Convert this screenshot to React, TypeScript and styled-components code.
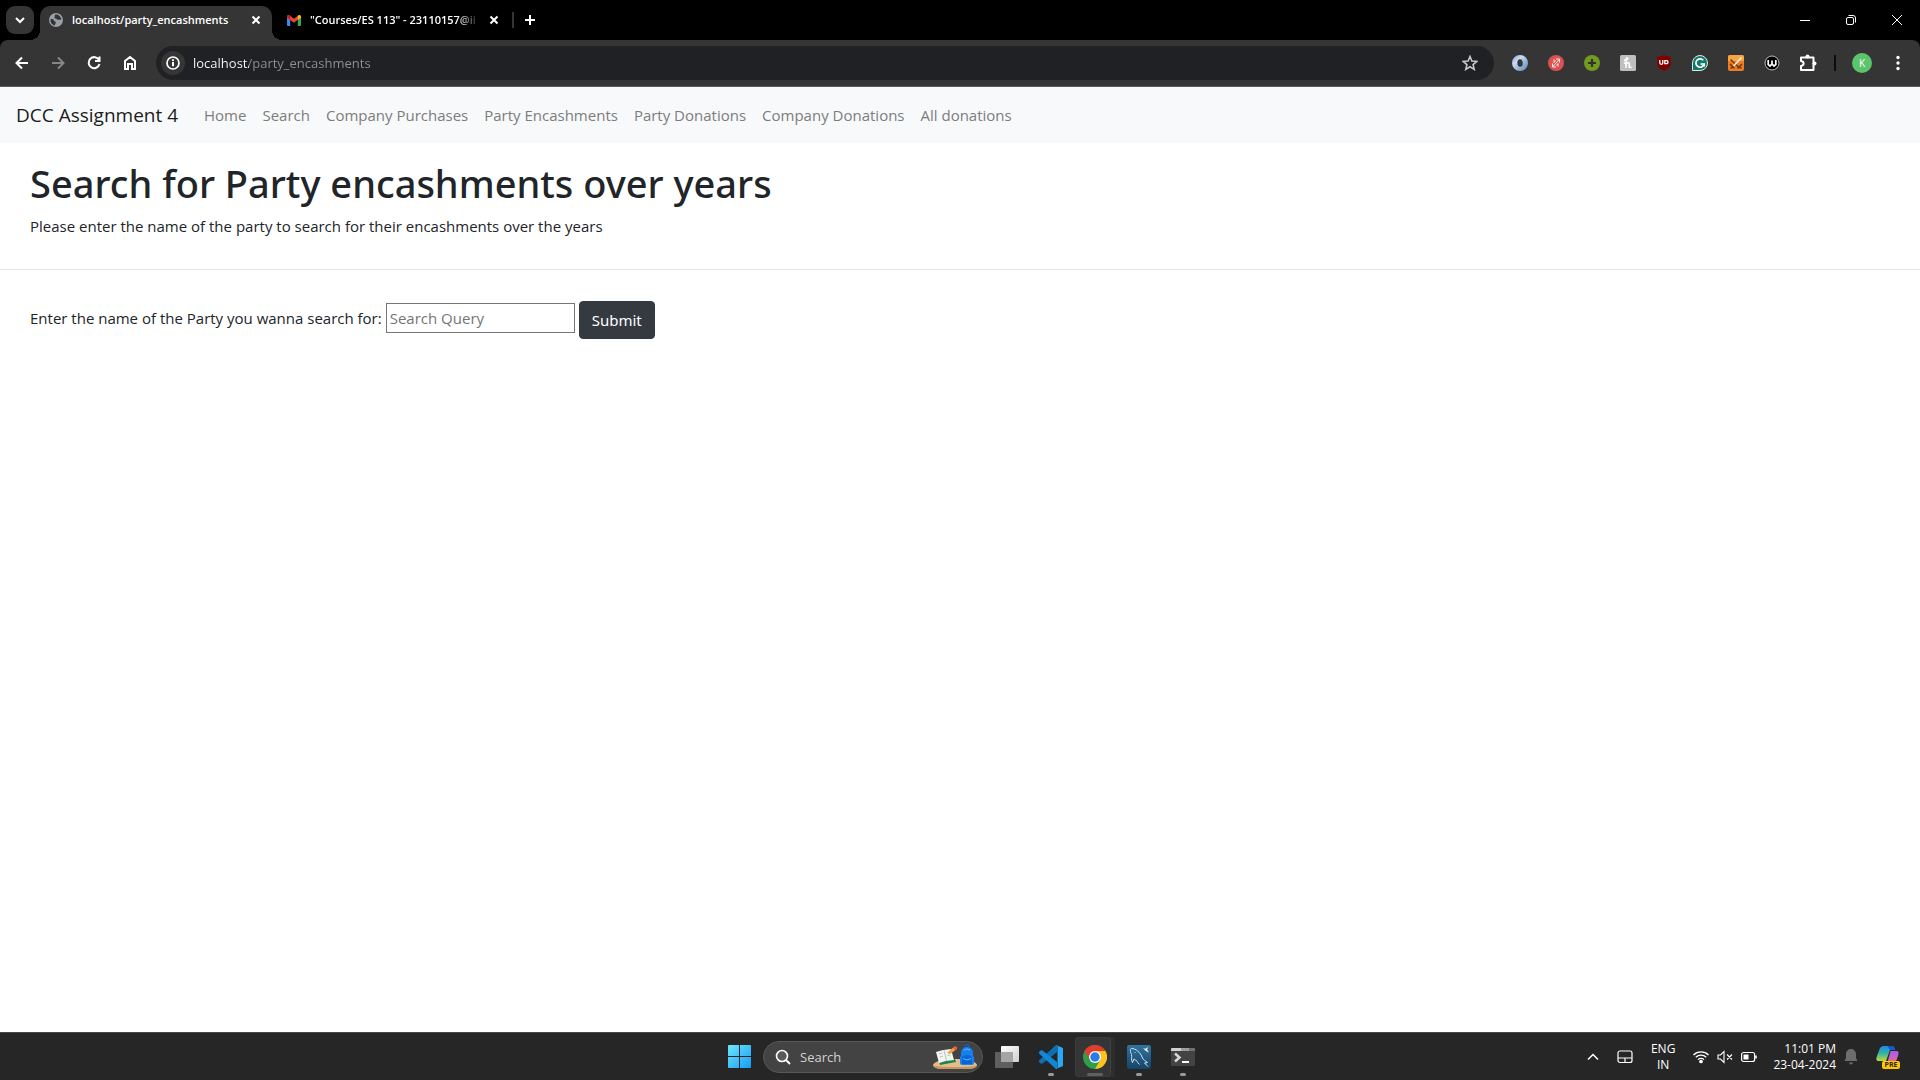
import React, { ReactNode } from "react";
import styled, { createGlobalStyle } from "styled-components";

const GlobalStyle = createGlobalStyle`
  *, *::before, *::after { box-sizing: border-box; }
  body {
    margin: 0;
    background: #fff;
    font-family: "Open Sans", "Noto Sans", sans-serif;
  }
  button, input { font-family: inherit; }
  svg { display: block; }
`;

const Screen = styled.div`
  display: flex;
  flex-direction: column;
  min-height: 100vh;
`;

/* ---------- Browser ---------- */

const IconButton = styled.button<{ $width?: number; $height?: number; $color?: string }>`
  display: flex;
  align-items: center;
  justify-content: center;
  flex: none;
  width: ${(p) => p.$width ?? 36}px;
  height: ${(p) => p.$height ?? 34}px;
  padding: 0;
  border: 0;
  background: none;
  color: ${(p) => p.$color ?? "#fff"};
`;

const TabStrip = styled.div`
  display: flex;
  align-items: center;
  height: 40px;
  padding: 0 0 0 6px;
  background: #000;
`;

const TabSearch = styled.button`
  display: flex;
  align-items: center;
  justify-content: center;
  width: 28px;
  height: 28px;
  margin-right: 6px;
  padding: 0;
  border: 0;
  border-radius: 9px;
  background: #353535;
  color: #fff;
`;

const Tab = styled.div<{ $active?: boolean }>`
  display: flex;
  align-items: center;
  align-self: flex-end;
  width: ${(p) => (p.$active ? 232 : 240)}px;
  height: 34px;
  padding: 0 4px 6px ${(p) => (p.$active ? 9 : 15)}px;
  border-radius: 10px 10px 0 0;
  background: ${(p) => (p.$active ? "#353535" : "transparent")};
`;

const TabFoot = styled.span<{ $side: "left" | "right" }>`
  align-self: flex-end;
  width: 10px;
  height: 10px;
  margin-${(p) => p.$side}: -10px;
  background: radial-gradient(
    circle at ${(p) => (p.$side === "left" ? "0" : "100%")} 0,
    transparent 10px,
    #353535 10px
  );
`;

const TabTitle = styled.span<{ $fade?: boolean }>`
  flex: 1;
  margin-left: 9px;
  color: #fff;
  font-size: 11px;
  font-weight: 600;
  line-height: 18px;
  white-space: nowrap;
  ${(p) => p.$fade && "mask-image: linear-gradient(to right, #000 86%, transparent);"}
`;

const TabDivider = styled.span`
  width: 2px;
  height: 16px;
  background: #353535;
`;

const WindowControls = styled.div`
  display: flex;
  margin-left: auto;
`;

const ToolbarBack = styled.div`
  background: #000;
`;

const Toolbar = styled.div`
  display: flex;
  align-items: center;
  height: 47px;
  padding: 0 4px;
  border-bottom: 1px solid #5c5c5c;
  border-radius: 8px 8px 0 0;
  background: #353535;
`;

const AddressBar = styled.div`
  display: flex;
  align-items: center;
  flex: 1;
  height: 34px;
  margin: 0 8px;
  padding: 0 6px 0 5px;
  border-radius: 17px;
  background: #202124;
`;

const SiteInfo = styled.button`
  display: flex;
  align-items: center;
  justify-content: center;
  width: 24px;
  height: 24px;
  margin-right: 8px;
  padding: 0;
  border: 0;
  border-radius: 50%;
  background: #353535;
  color: #fff;
`;

const AddressInput = styled.input`
  flex: 1;
  min-width: 0;
  padding: 0;
  border: 0;
  outline: 0;
  background: linear-gradient(to right, #fff 56px, #8d9094 56px);
  background-clip: text;
  -webkit-background-clip: text;
  color: transparent;
  font-size: 13px;
  line-height: 20px;
`;

const ToolbarDivider = styled.span`
  width: 2px;
  height: 16px;
  margin: 0 8px;
  background: #0c0c0c;
`;

const Avatar = styled.span`
  display: flex;
  align-items: center;
  justify-content: center;
  width: 20px;
  height: 20px;
  border-radius: 50%;
  background: #5bc46c;
  color: #fff;
  font-size: 10px;
`;

/* ---------- Web page ---------- */

const NavBar = styled.nav`
  display: flex;
  align-items: center;
  height: 56px;
  padding: 0 16px;
  background: #f8f9fa;
`;

const Brand = styled.a`
  margin-right: 18px;
  color: #1c1c1c;
  font-size: 19px;
  line-height: 30px;
  text-decoration: none;
`;

const NavLinks = styled.ul`
  display: flex;
  margin: 0;
  padding: 0;
  list-style: none;
`;

const NavLink = styled.a`
  display: block;
  padding: 0 8px;
  color: #7c7d7d;
  font-size: 15px;
  line-height: 24px;
  text-decoration: none;
`;

const Page = styled.main`
  flex: 1;
  color: #212529;
  font-size: 15px;
  line-height: 24px;
`;

const Intro = styled.header`
  padding: 16px 30px 31px;
  border-bottom: 1px solid #e5e5e5;
`;

const Title = styled.h1`
  margin: 0 0 7px;
  font-family: "Noto Sans", "Open Sans", sans-serif;
  font-size: 38px;
  font-weight: 500;
  line-height: 48px;
`;

const Lead = styled.p`
  margin: 0;
`;

const SearchForm = styled.form`
  display: flex;
  align-items: flex-start;
  gap: 4px;
  padding: 31px 30px;
`;

const FieldLabel = styled.label`
  padding-top: 5px;
`;

const QueryInput = styled.input`
  width: 189px;
  height: 30px;
  margin-top: 2px;
  padding: 1px 3px;
  border: 1px solid #767676;
  border-radius: 0;
  color: #212529;
  font-size: 15px;
  &::placeholder { color: #757575; opacity: 1; }
`;

const SubmitButton = styled.button`
  height: 38px;
  padding: 0 12px;
  border: 1px solid #343a40;
  border-radius: 4px;
  background: #343a40;
  color: #fff;
  font-family: "Noto Sans", "Open Sans", sans-serif;
  font-size: 15px;
  line-height: 24px;
`;

/* ---------- Taskbar ---------- */

const Taskbar = styled.footer`
  display: grid;
  grid-template-columns: 1fr auto 1fr;
  align-items: center;
  height: 48px;
  border-top: 1px solid #484848;
  background: #262626;
  color: #fff;
`;

const TaskGroup = styled.div`
  display: flex;
  align-items: center;
  grid-column: 2;
  padding-left: 2px;
`;

const TaskSearch = styled.label`
  display: flex;
  align-items: center;
  width: 220px;
  height: 32px;
  margin: 0 2px;
  padding: 0 4px 0 11px;
  border: 1px solid #575757;
  border-radius: 16px;
  background: #434343;
`;

const TaskSearchInput = styled.input`
  flex: 1;
  min-width: 0;
  margin-left: 9px;
  padding: 0;
  border: 0;
  outline: 0;
  background: none;
  color: #fff;
  font-size: 13px;
  &::placeholder { color: #d2d2d2; opacity: 1; }
`;

const AppButton = styled.button`
  display: flex;
  flex-direction: column;
  align-items: center;
  justify-content: center;
  width: 44px;
  height: 47px;
  padding: 0;
  border: 0;
  background: none;
`;

const AppTile = styled.span<{ $active?: boolean }>`
  display: flex;
  flex-direction: column;
  align-items: center;
  width: 40px;
  height: 40px;
  padding-top: 8px;
  border-radius: 4px;
  background: ${(p) => (p.$active ? "#353535" : "transparent")};
  box-shadow: ${(p) => (p.$active ? "inset -4px 0 #2d2d2d, inset -5px 0 #414141, inset 0 0 0 1px #3b3b3b" : "none")};
`;

const Running = styled.span<{ $active?: boolean }>`
  width: ${(p) => (p.$active ? 16 : 6)}px;
  height: 3px;
  margin-top: 4px;
  border-radius: 2px;
  background: ${(p) => (p.$active ? "#606060" : "#9a9a9a")};
`;

const Tray = styled.div`
  display: flex;
  align-items: center;
  justify-content: flex-end;
  padding-right: 20px;
`;

const TrayButton = styled.button<{ $gap: number }>`
  display: flex;
  align-items: center;
  gap: 8px;
  margin-right: ${(p) => p.$gap}px;
  padding: 0;
  border: 0;
  background: none;
  color: #fff;
`;

const TrayText = styled.span<{ $align: "center" | "right" }>`
  font-size: 12px;
  line-height: 16px;
  text-align: ${(p) => p.$align};
  white-space: pre-line;
`;

/* ---------- Drawings ---------- */

const Stroke = ({ size = 16, width = 2, children }: { size?: number; width?: number; children: ReactNode }) => (
  <svg width={size} height={size} viewBox={`0 0 ${size} ${size}`} fill="none" stroke="currentColor" strokeWidth={width}>
    {children}
  </svg>
);

const CloseIcon = () => (
  <Stroke size={10} width={2}><path d="M1.5 1.5l7 7M8.5 1.5l-7 7" /></Stroke>
);

const Globe = () => (
  <svg width="14" height="14" viewBox="0 0 14 14">
    <circle cx="7" cy="7" r="7" fill="#9aa0a6" />
    <path d="M1.6 6.2c1.8-.3 3 .2 3.400 1.300.3 1 1.600.8 1.800 1.800.2 1-.8 1.300-.9 3.200-2.500-.4-5-3-4.300-6.300zM6 1.500c-.7 1 .4 1.500-.3 2.300-.8.7-.2 1.700.9 1.600 1.200 0 1 1 2.100 1.300 1.400.4 2-.5 3.800-.2C12 4 10 1.300 7 1.400z" fill="#353535" />
  </svg>
);

const Gmail = () => (
  <svg width="14" height="11" viewBox="0 0 14 11">
    <path d="M0 2h3.200v9H1a1 1 0 0 1-1-1z" fill="#4285f4" />
    <path d="M10.800 2H14v8a1 1 0 0 1-1 1h-2.200z" fill="#34a853" />
    <path d="M0 1.700C0 .2 1.700-.4 2.800.5L7 3.700 11.200.5v4L7 7.700 0 2.800z" fill="#ea4335" />
    <path d="M0 1.700C0 .2 1.700-.4 2.800.5l.4.3v4L0 2.800z" fill="#c5221f" />
    <path d="M10.800.8l.4-.3C12.300-.4 14 .2 14 1.700v1.100l-3.200 2z" fill="#fbbc04" />
  </svg>
);

const extensions: { name: string; art: ReactNode }[] = [
  { name: "Ring", art: <>
    <defs><linearGradient id="ring" x1="0" y1="0" x2="1" y2="1"><stop offset="0" stopColor="#7fa3cf" /><stop offset=".35" stopColor="#c9dcf2" /><stop offset=".65" stopColor="#8fb0d8" /><stop offset="1" stopColor="#5f86b8" /></linearGradient></defs>
    <path fillRule="evenodd" d="M8 0a8 8 0 1 1 0 16A8 8 0 0 1 8 0zM8 4.200C5.800 4.200 5.400 6 5.400 8s.6 3.800 2.800 3.800S10.800 10 10.700 8 10.200 4.200 8 4.200z" fill="url(#ring)" />
  </> },
  { name: "Redirect", art: <>
    <circle cx="8" cy="8" r="8" fill="#dc5151" />
    <path d="M8 4h3.500v3.500M8 12H4.500V8.500M11.500 4L4.500 12M6 4.500v3M10 8.500v3M7.500 5.500L6 7.500M10 8.500L8.500 10.500" stroke="#ffe9e9" fill="none" strokeWidth="1" />
  </> },
  { name: "Add", art: <>
    <circle cx="8" cy="8" r="8" fill="#739b1d" />
    <path d="M8 4v8M4 8h8" stroke="#303030" strokeWidth="2.200" />
  </> },
  { name: "Honey", art: <>
    <rect width="16" height="16" rx="1.500" fill="#bfbfbf" />
    <path d="M4 5c2.500 1 4.500-1 3.500-2S6 4 6 6v7M6 9.500C7 7.500 9.600 7 9.400 9.300l-.3 2c-.1 1.600 1.600 1.500 2.400.4M3.800 8h3" stroke="#fff" strokeWidth="1.500" fill="none" />
  </> },
  { name: "Shield", art: <>
    <path d="M8 0c2 1 4 1.600 6.800 1.700v6.800C14.500 12 11.500 14 8 16 4.500 14 1.500 12 1.200 8.500V1.700C4 1.600 6 1 8 0z" fill="#800000" />
    <path d="M3.800 5v2.800a1.500 1.500 0 0 0 3 0V5M8.800 5.700v3h1.700a1.500 1.500 0 0 0 0-3H8.200" stroke="#fff" strokeWidth="1.300" fill="none" />
  </> },
  { name: "Grammar", art: <>
    <path d="M8 .5a7.500 7.500 0 1 1 0 15H.5V8A7.500 7.500 0 0 1 8 .5z" fill="#127b68" stroke="#dce9e6" />
    <path d="M11.300 5.300A4.200 4.200 0 1 0 12.200 9H8.500M12.200 8.500v3" stroke="#fff" strokeWidth="1.700" fill="none" />
  </> },
  { name: "Swords", art: <>
    <rect width="16" height="16" rx="2" fill="#ee7d20" />
    <path d="M0 2a2 2 0 0 1 2-2h12a2 2 0 0 1 2 2v4H0z" fill="#f7a540" />
    <path d="M2.500 4.500l9 8.500M2 9l4.500 4.500M9.500 13.500L14 9M2.500 13.500L5.500 11M13.500 13.500L11 11" stroke="#713912" strokeWidth="1.500" />
    <path d="M13.500 2.500L5.500 11" stroke="#f4f0ec" strokeWidth="1.700" />
  </> },
  { name: "Wappler", art: <>
    <circle cx="8" cy="8" r="7" fill="#000" stroke="#bdbdbd" strokeWidth="1" />
    <path d="M4.200 5v4.500L6 11l2-2 2 2 1.800-1.500V5M8 5.500V9" stroke="#fff" strokeWidth="1.700" fill="none" />
  </> },
];

const StartIcon = () => (
  <svg width="23" height="23" viewBox="0 0 23 23">
    <defs>
      <linearGradient id="start" x1="0" y1="0" x2="1" y2="1">
        <stop offset="0" stopColor="#6ee6fb" /><stop offset="1" stopColor="#169bf5" />
      </linearGradient>
    </defs>
    <path d="M1 0h10v11H0V1a1 1 0 0 1 1-1zM12 0h10a1 1 0 0 1 1 1v10H12zM0 12h11v11H1a1 1 0 0 1-1-1zM12 12h11v10a1 1 0 0 1-1 1H12z" fill="url(#start)" />
  </svg>
);

const DeskScene = () => (
  <svg width="46" height="26" viewBox="0 0 46 26">
    <path d="M1 21c0-2 8-6 15-6h15c7 0 14 4 14 6s-4 4-8 4H9c-4 0-8-2-8-4z" fill="#e3bd90" />
    <path d="M1 21.500c2 2 5 3.500 8 3.500h28c4 0 7-1.500 8-3.500-8 2-35 2-44 0z" fill="#c9965d" />
    <path d="M5 10l3 11 16-3-1-3z" fill="#218349" />
    <path d="M4 8l7-2 8-1 3 11-8 1-7 2z" fill="#f1f4ef" />
    <path d="M12 6l2.500 11M7 10l3-1M8 13l3-1M15 8.500l3-.5M15.500 11.500l3-.5" stroke="#a5b7ac" strokeWidth=".8" />
    <path d="M16 10l1-3 5-4 2 2.500-5 4z" fill="#f2a23b" /><path d="M21 4l2-2 2 1v2l-1.500 1.500z" fill="#e65a4e" />
    <path d="M33 3c0-3 4-3 4 0" stroke="#0b5fc5" strokeWidth="1.300" fill="none" />
    <path d="M29 9c0-8 12-8 12 0v3l1 1v6c0 1-1 2-2 2H30c-1 0-2-1-2-2v-6l1-1z" fill="#1680ee" />
    <path d="M30 14c0-4 10-4 10 0v6H30z" fill="#0964d5" /><path d="M31 14.500q4 3 8 0" stroke="#58b7fc" fill="none" />
    <path d="M32 6q3-2 6 0" stroke="#5cc0ff" fill="none" />
  </svg>
);

const TaskViewIcon = () => (
  <svg width="24" height="24" viewBox="0 0 24 24">
    <defs><linearGradient id="pane" x1="0" y1="0" x2="1" y2="1"><stop offset="0" stopColor="#fff" /><stop offset="1" stopColor="#cfcfcf" /></linearGradient></defs>
    <rect y="7" width="18" height="16" rx="1" fill="#5f5f5f" />
    <rect x="6" y="1" width="18" height="16" rx="1" fill="url(#pane)" />
    <path d="M6 7h12v10H6z" fill="#a5a5a5" />
  </svg>
);

const CodeIcon = () => (
  <svg width="24" height="24" viewBox="0 0 24 24">
    <path d="M17 0L0 15.500v1.500l2 1.700 1.500-.1L18 7V0z" fill="#0b70b8" />
    <path d="M17 24L0 8.500V7l2-1.700 1.500.1L18 17v7z" fill="#1287d3" />
    <path d="M17 0l7 3v18l-7 3c1-.3 1.500-1 1.500-2V2c0-1-.5-1.700-1.500-2z" fill="#2aa8f2" />
  </svg>
);

const ChromeIcon = () => (
  <svg width="24" height="24" viewBox="0 0 24 24">
    <circle cx="12" cy="12" r="12" fill="#2e9e49" />
    <path d="M12 6h10.400A12 12 0 0 1 12 24l5.200-9z" fill="#fcc31e" />
    <path d="M1.600 6A12 12 0 0 1 22.400 6H12L6.800 15z" fill="#e33b2e" />
    <circle cx="12" cy="12" r="6" fill="#fff" /><circle cx="12" cy="12" r="4.700" fill="#287be8" />
  </svg>
);

const DolphinIcon = () => (
  <svg width="24" height="24" viewBox="0 0 24 24">
    <defs><linearGradient id="sea" x1="0" y1="0" x2="0" y2="1"><stop offset="0" stopColor="#31749f" /><stop offset="1" stopColor="#154468" /></linearGradient></defs>
    <rect width="24" height="24" rx="2" fill="url(#sea)" />
    <path d="M5.500 17.500C3.500 14 5.500 12 4.500 9.500 3.500 7 2.500 4 4.500 3.500c4 0 9 3.500 11 9.500.6 1.700 2.500 2.500 5 4.500l-3 .5 3.500 3.500M5.500 17.500L7 14c2.500 1 3 3 5.500 5.500M7.500 7l.8.8" stroke="#d3e2ec" strokeWidth="1" fill="none" />
    <path d="M16 3l2.500.8L21 2l-.8 2.800L22 7.500l-3.200-1.600z" fill="#e8f2f8" />
  </svg>
);

const TerminalIcon = () => (
  <svg width="24" height="24" viewBox="0 0 24 24">
    <rect y="3" width="24" height="18" rx="1" fill="#434343" />
    <path d="M0 6V4a1 1 0 0 1 1-1h9v3z" fill="#d0d0d0" /><path d="M10 3h8v3h-8z" fill="#9d9d9d" /><path d="M18 3h5a1 1 0 0 1 1 1v2h-6z" fill="#717171" />
    <path d="M4 8.500l4.500 4L4 16.500" stroke="#d6d6d6" strokeWidth="2.500" fill="none" /><path d="M11 17h7" stroke="#fff" strokeWidth="2" />
  </svg>
);

const apps = [
  { name: "Task view", icon: <TaskViewIcon />, running: false, active: false },
  { name: "Visual Studio Code", icon: <CodeIcon />, running: true, active: false },
  { name: "Google Chrome", icon: <ChromeIcon />, running: true, active: true },
  { name: "MySQL Workbench", icon: <DolphinIcon />, running: true, active: false },
  { name: "Terminal", icon: <TerminalIcon />, running: true, active: false },
];

const CopilotIcon = () => (
  <svg width="24" height="24" viewBox="0 0 24 24">
    <defs>
      <linearGradient id="co1" x1="0" y1="0" x2="0" y2="1"><stop offset="0" stopColor="#1b8ae8" /><stop offset=".5" stopColor="#34b6a0" /><stop offset="1" stopColor="#c5d935" /></linearGradient>
      <linearGradient id="co2" x1="0" y1="0" x2="0" y2="1"><stop offset="0" stopColor="#a05ff0" /><stop offset="1" stopColor="#f2688d" /></linearGradient>
    </defs>
    <path d="M7 1h9c2 0 2 1 3 4l-5 0-4 11H3c-3 0-3-2-2-5l3-8c1-1 2-2 3-2z" fill="url(#co1)" />
    <path d="M11 1h5c2 0 2 2 3 4h-4c-2 0-2-3-4-4z" fill="#1957c2" />
    <path d="M15 6h5c3 0 3 2 2 5l-3 8h-8l3-11c0-1 0-2 1-2z" fill="url(#co2)" />
    <rect x="6" y="16" width="18" height="8" rx="2" fill="#ffc60a" />
    <text x="15" y="22" textAnchor="middle" fontFamily="Open Sans, sans-serif" fontSize="7" fontWeight="700" fill="#30260a">PRE</text>
  </svg>
);

const navItems = ["Home", "Search", "Company Purchases", "Party Encashments", "Party Donations", "Company Donations", "All donations"];

export default function App() {
  return (
    <Screen>
      <GlobalStyle />
      <TabStrip>
        <TabSearch aria-label="Search tabs"><Stroke size={10}><path d="M1 3l4 4 4-4" /></Stroke></TabSearch>
        <TabFoot $side="left" />
        <Tab $active>
          <Globe />
          <TabTitle>localhost/party_encashments</TabTitle>
          <IconButton $width={24} $height={24} aria-label="Close tab"><CloseIcon /></IconButton>
        </Tab>
        <TabFoot $side="right" />
        <Tab>
          <Gmail />
          <TabTitle $fade>"Courses/ES 113" - 23110157@ii</TabTitle>
          <IconButton $width={28} $height={24} aria-label="Close tab"><CloseIcon /></IconButton>
        </Tab>
        <TabDivider />
        <IconButton $width={32} aria-label="New tab"><Stroke size={12}><path d="M6 1v10M1 6h10" /></Stroke></IconButton>
        <WindowControls>
          <IconButton $width={46} aria-label="Minimize"><Stroke size={10} width={1}><path d="M0 5.500h10" /></Stroke></IconButton>
          <IconButton $width={46} aria-label="Restore"><Stroke size={10} width={1}><rect x=".5" y="2.500" width="7" height="7" rx="1.500" /><path d="M2.500.5H7A2.500 2.500 0 0 1 9.500 3v4.500" /></Stroke></IconButton>
          <IconButton $width={46} aria-label="Close"><Stroke size={10} width={1}><path d="M0 0l10 10M10 0L0 10" /></Stroke></IconButton>
        </WindowControls>
      </TabStrip>
      <ToolbarBack>
        <Toolbar>
          <IconButton aria-label="Back"><Stroke><path d="M14 8H3M8 2.500L2.500 8 8 13.500" /></Stroke></IconButton>
          <IconButton $color="#868686" aria-label="Forward"><Stroke><path d="M2 8h11M8 2.500L13.500 8 8 13.500" /></Stroke></IconButton>
          <IconButton aria-label="Reload"><Stroke><path d="M13 5A5.500 5.500 0 1 0 13.500 9M13.500 1.500V6H9" /></Stroke></IconButton>
          <IconButton aria-label="Home page"><Stroke><path d="M3 14V6l5-4 5 4v8h-3V9H6v5z" /></Stroke></IconButton>
          <AddressBar>
            <SiteInfo aria-label="Site information"><Stroke><circle cx="8" cy="8" r="6" strokeWidth="1.700" /><path d="M8 7v4.200M8 4.300v1.700" /></Stroke></SiteInfo>
            <AddressInput aria-label="Address" defaultValue="localhost/party_encashments" />
            <IconButton $color="#c7c7c7" aria-label="Bookmark this page"><Stroke width={1.6}><path d="M8 1.500l1.900 4.500 4.900.4-3.700 3.200 1.100 4.800L8 11.800l-4.200 2.600 1.100-4.800L1.200 6.400 6.100 6z" /></Stroke></IconButton>
          </AddressBar>
          {extensions.map((e) => (
            <IconButton key={e.name} aria-label={e.name}><svg width="16" height="16" viewBox="0 0 16 16">{e.art}</svg></IconButton>
          ))}
          <IconButton aria-label="Extensions">
            <svg width="18" height="18" viewBox="0 0 18 18">
              <path d="M2 3.500h12.500V16H2v-4c3.500-.5 3.500-4.500 0-5z" fill="none" stroke="#fff" strokeWidth="2" strokeLinejoin="round" />
              <circle cx="8.500" cy="2.500" r="2" fill="#fff" /><circle cx="15.500" cy="9.500" r="2" fill="#fff" />
            </svg>
          </IconButton>
          <ToolbarDivider />
          <IconButton aria-label="Profile"><Avatar>K</Avatar></IconButton>
          <IconButton aria-label="Menu"><svg width="4" height="16" viewBox="0 0 4 16" fill="#fff"><circle cx="2" cy="2.500" r="1.700" /><circle cx="2" cy="8" r="1.700" /><circle cx="2" cy="13.500" r="1.700" /></svg></IconButton>
        </Toolbar>
      </ToolbarBack>

      <NavBar>
        <Brand href="#">DCC Assignment 4</Brand>
        <NavLinks>
          {navItems.map((n) => <li key={n}><NavLink href="#">{n}</NavLink></li>)}
        </NavLinks>
      </NavBar>
      <Page>
        <Intro>
          <Title>Search for Party encashments over years</Title>
          <Lead>Please enter the name of the party to search for their encashments over the years</Lead>
        </Intro>
        <SearchForm onSubmit={(e) => e.preventDefault()}>
          <FieldLabel htmlFor="party">Enter the name of the Party you wanna search for:</FieldLabel>
          <QueryInput id="party" placeholder="Search Query" />
          <SubmitButton type="submit">Submit</SubmitButton>
        </SearchForm>
      </Page>

      <Taskbar>
        <TaskGroup>
          <AppButton aria-label="Start"><StartIcon /></AppButton>
          <TaskSearch>
            <Stroke width={1.6}><circle cx="7" cy="7" r="5.500" fill="#5a5a5a" /><path d="M11 11l4 4" strokeWidth="2" /></Stroke>
            <TaskSearchInput aria-label="Search" placeholder="Search" />
            <DeskScene />
          </TaskSearch>
          {apps.map((a) => (
            <AppButton key={a.name} aria-label={a.name}>
              <AppTile $active={a.active}>
                {a.icon}
                {a.running && <Running $active={a.active} />}
              </AppTile>
            </AppButton>
          ))}
        </TaskGroup>
        <Tray>
          <TrayButton $gap={18} aria-label="Show hidden icons"><Stroke size={12} width={1.5}><path d="M1 8.500l5-5 5 5" /></Stroke></TrayButton>
          <TrayButton $gap={18} aria-label="Touchpad"><Stroke width={1.2}><rect x="1" y="2" width="14" height="11.500" rx="2" /><path d="M1 9h14M8 9v4.500" /></Stroke></TrayButton>
          <TrayButton $gap={18}><TrayText $align="center">{"ENG\nIN"}</TrayText></TrayButton>
          <TrayButton $gap={16} aria-label="Network, sound and battery">
            <Stroke width={1.3}><path d="M.5 6a10.600 10.600 0 0 1 15 0M2.800 8.300a7.300 7.300 0 0 1 10.400 0M5 10.600a4.200 4.200 0 0 1 6 0" /><circle cx="8" cy="12.500" r="1.200" fill="currentColor" /></Stroke>
            <Stroke width={1.1}><path d="M1 6h2.500L7 2.500v11L3.500 10H1zM10 5.500l5 5M15 5.500l-5 5" /></Stroke>
            <Stroke width={1.2}><rect x=".6" y="3.500" width="13" height="9" rx="2" /><rect x="2.500" y="5.500" width="5" height="5" fill="currentColor" stroke="none" /><path d="M15 6.500v3" strokeWidth="1.600" /></Stroke>
          </TrayButton>
          <TrayButton $gap={18} aria-label="Clock and notifications">
            <TrayText $align="right">{"11:01 PM\n23-04-2024"}</TrayText>
            <svg width="14" height="16" viewBox="0 0 14 16" fill="#6d6d6d"><path d="M7 0a5 5 0 0 1 5 5v4l1.500 3h-13L2 9V5a5 5 0 0 1 5-5zM5 13.500h4a2 2 0 0 1-4 0z" /></svg>
          </TrayButton>
          <TrayButton $gap={0} aria-label="Copilot"><CopilotIcon /></TrayButton>
        </Tray>
      </Taskbar>
    </Screen>
  );
}
